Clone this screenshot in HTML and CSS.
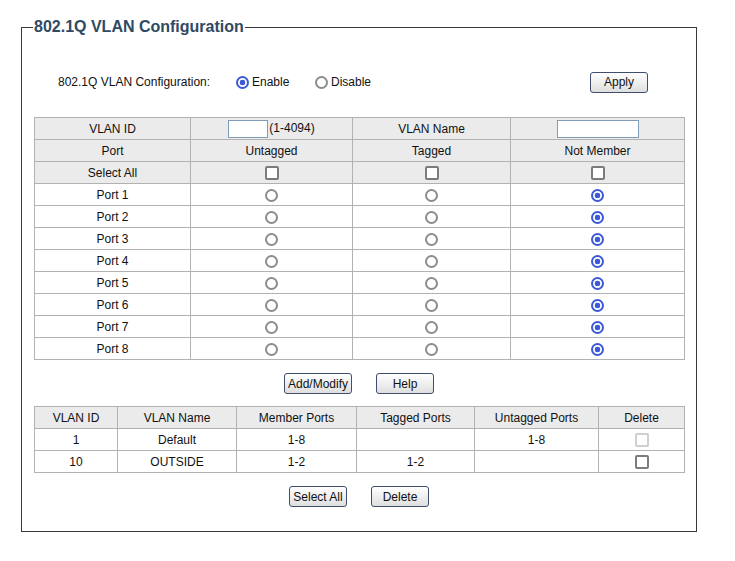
FILE: index.html
```html
<!DOCTYPE html>
<html>
<head>
<meta charset="utf-8">
<link rel="stylesheet" href="styles.css">
</head>
<body>
<fieldset class="box">
  <legend class="title">802.1Q VLAN Configuration</legend>
  <div class="config-row">
    <span class="config-label">802.1Q VLAN Configuration:</span>
    <label class="opt opt-enable"><input type="radio" name="vc" checked>Enable</label>
    <label class="opt"><input type="radio" name="vc">Disable</label>
    <button class="btn btn-apply">Apply</button>
  </div>

  <table class="grid main">
    <colgroup><col class="c1"><col class="c2"><col class="c3"><col class="c4"></colgroup>
    <tr class="head">
      <td>VLAN ID</td>
      <td><input class="txt txt-id" type="text">(1-4094)</td>
      <td>VLAN Name</td>
      <td><input class="txt txt-name" type="text"></td>
    </tr>
    <tr class="head"><td>Port</td><td>Untagged</td><td>Tagged</td><td>Not Member</td></tr>
    <tr class="head"><td>Select All</td><td><input type="checkbox"></td><td><input type="checkbox"></td><td><input type="checkbox"></td></tr>
    <tr><td>Port 1</td><td><input type="radio" name="p1"></td><td><input type="radio" name="p1"></td><td><input type="radio" name="p1" checked></td></tr>
    <tr><td>Port 2</td><td><input type="radio" name="p2"></td><td><input type="radio" name="p2"></td><td><input type="radio" name="p2" checked></td></tr>
    <tr><td>Port 3</td><td><input type="radio" name="p3"></td><td><input type="radio" name="p3"></td><td><input type="radio" name="p3" checked></td></tr>
    <tr><td>Port 4</td><td><input type="radio" name="p4"></td><td><input type="radio" name="p4"></td><td><input type="radio" name="p4" checked></td></tr>
    <tr><td>Port 5</td><td><input type="radio" name="p5"></td><td><input type="radio" name="p5"></td><td><input type="radio" name="p5" checked></td></tr>
    <tr><td>Port 6</td><td><input type="radio" name="p6"></td><td><input type="radio" name="p6"></td><td><input type="radio" name="p6" checked></td></tr>
    <tr><td>Port 7</td><td><input type="radio" name="p7"></td><td><input type="radio" name="p7"></td><td><input type="radio" name="p7" checked></td></tr>
    <tr><td>Port 8</td><td><input type="radio" name="p8"></td><td><input type="radio" name="p8"></td><td><input type="radio" name="p8" checked></td></tr>
  </table>

  <div class="btn-row">
    <button class="btn btn-add">Add/Modify</button>
    <button class="btn btn-std">Help</button>
  </div>

  <table class="grid list">
    <colgroup><col class="l1"><col class="l2"><col class="l3"><col class="l4"><col class="l5"><col class="l6"></colgroup>
    <tr class="head"><td>VLAN ID</td><td>VLAN Name</td><td>Member Ports</td><td>Tagged Ports</td><td>Untagged Ports</td><td>Delete</td></tr>
    <tr><td>1</td><td>Default</td><td>1-8</td><td></td><td>1-8</td><td><input type="checkbox" disabled></td></tr>
    <tr><td>10</td><td>OUTSIDE</td><td>1-2</td><td>1-2</td><td></td><td><input type="checkbox"></td></tr>
  </table>

  <div class="btn-row btn-row-bottom">
    <button class="btn btn-std">Select All</button>
    <button class="btn btn-std">Delete</button>
  </div>
</fieldset>
</body>
</html>
```
FILE: styles.css
```css
html, body {
  margin: 0;
  padding: 0;
  background: #fff;
}
body {
  font-family: "Liberation Sans", Arial, sans-serif;
  font-size: 12px;
  color: #111;
}
.box {
  box-sizing: border-box;
  width: 676px;
  margin: 17px 0 0 21px;
  padding: 0 12px 24px 12px;
  border: 1px solid #3a3a3a;
  min-width: 0;
}
.title {
  padding: 0 1px;
  margin-left: -1px;
  font-size: 16px;
  line-height: 20px;
  font-weight: bold;
  color: #2f4a63;
}
.config-row {
  display: flex;
  align-items: center;
  height: 22px;
  margin-top: 34px;
  padding-left: 24px;
}
.config-label {
  width: 178px;
}
.opt {
  display: flex;
  align-items: center;
  width: 79px;
}
input[type="radio"] {
  appearance: none;
  -webkit-appearance: none;
  box-sizing: border-box;
  width: 13px;
  height: 13px;
  border: 2px solid #8c8c8c;
  border-radius: 50%;
  background: #fff;
  margin: 0;
  vertical-align: middle;
}
input[type="radio"]:checked {
  border-color: #3c5ad8;
  background: radial-gradient(circle, #3c5ad8 0 2.6px, #fff 3.1px);
}
.opt input[type="radio"] {
  margin: 0 3px 0 0;
}
input[type="checkbox"] {
  appearance: none;
  -webkit-appearance: none;
  box-sizing: border-box;
  width: 14px;
  height: 14px;
  border: 2px solid #7c7c80;
  border-radius: 2px;
  background: #fff;
  margin: 0;
  vertical-align: middle;
}
input[type="checkbox"]:disabled {
  border-color: #cfcfcf;
}
.btn {
  font-family: "Liberation Sans", Arial, sans-serif;
  font-size: 12px;
  color: #111;
  height: 21px;
  padding: 0;
  border: 1px solid #3f4d6e;
  border-radius: 3px;
  background: linear-gradient(#ffffff, #ececec 60%, #dedede);
}
.btn-apply {
  width: 58px;
  margin-left: auto;
  margin-right: 36px;
}
.btn-add { width: 68px; }
.btn-std { width: 58px; }
.grid {
  width: 650px;
  border-collapse: collapse;
  table-layout: fixed;
  margin-top: 24px;
}
.grid td {
  border: 1px solid #b2b2b2;
  height: 21px;
  padding: 0;
  text-align: center;
  vertical-align: middle;
  line-height: 14px;
}
.grid tr {
  height: 22px;
}
.grid .head td {
  background: #ebebeb;
}
.c1 { width: 156px; }
.c2 { width: 162px; }
.c3 { width: 158px; }
.c4 { width: 174px; }
.l1 { width: 83px; }
.l2 { width: 119px; }
.l3 { width: 120px; }
.l4 { width: 118px; }
.l5 { width: 124px; }
.l6 { width: 86px; }
.txt {
  box-sizing: border-box;
  height: 18px;
  border: 1px solid #7f9db9;
  padding: 0 2px;
  margin: 0;
  vertical-align: middle;
  font-family: "Liberation Sans", Arial, sans-serif;
  font-size: 12px;
}
.txt-id { width: 40px; margin-right: 1px; }
.txt-name { width: 82px; }
.btn-row {
  display: flex;
  justify-content: center;
  gap: 24px;
  margin-top: 13px;
}
.list {
  margin-top: 12px;
}
.btn-row-bottom {
  margin-top: 13px;
}
```
